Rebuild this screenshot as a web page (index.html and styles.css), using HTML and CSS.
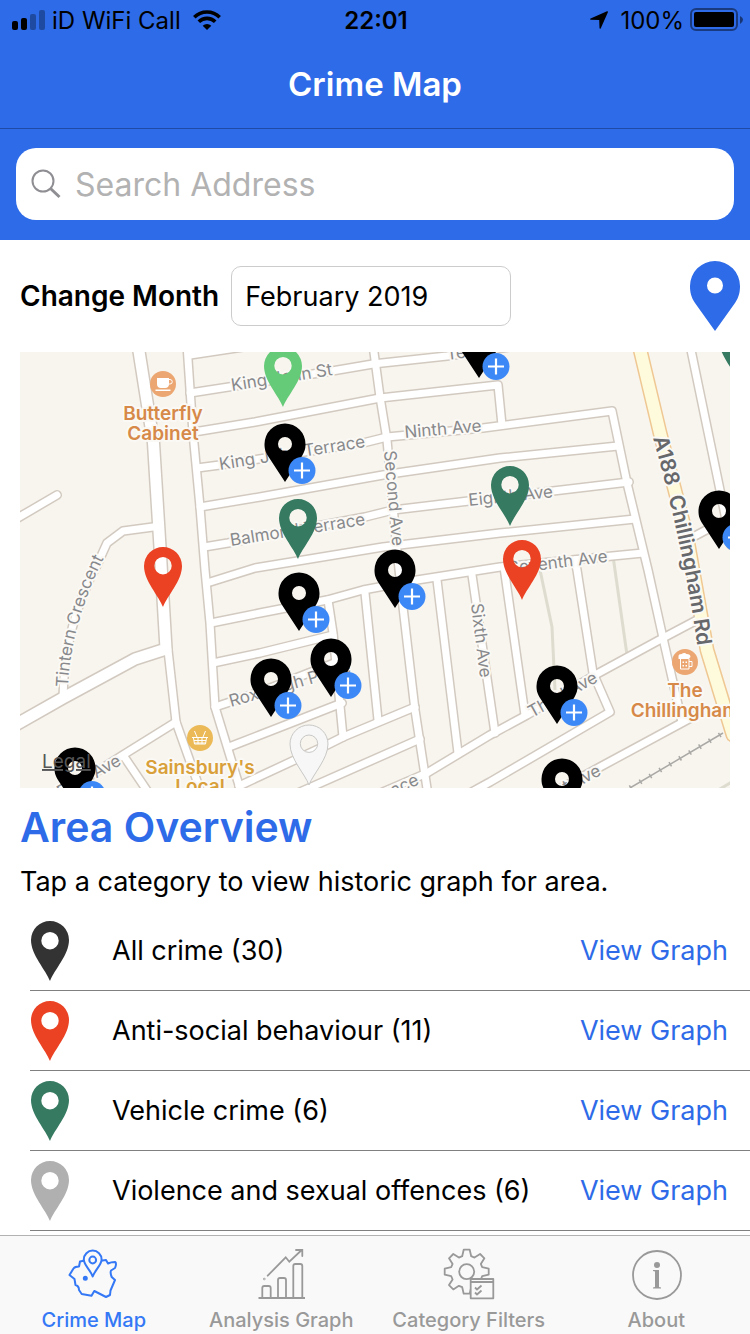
FILE: index.html
```html
<!DOCTYPE html>
<html lang="en">
<head>
<meta charset="utf-8">
<meta name="viewport" content="width=device-width, initial-scale=1">
<title>Crime Map</title>
<link rel="stylesheet" href="styles.css">
</head>
<body class="app">
<svg class="sprite" aria-hidden="true">
  <symbol id="pin" viewBox="0 0 38 60"><path fill="currentColor" fill-rule="evenodd" d="M19 60C15 49 0 34 0 19a19 19 0 0 1 38 0C38 34 23 49 19 60zM19 11a8.700 8.700 0 1 0 0 17.400a8.700 8.700 0 0 0 0-17.400z"/></symbol>
</svg>
<header class="top">
  <div class="status">
    <div class="status-side">
      <svg class="signal" viewBox="0 0 34 22" aria-hidden="true"><rect x="0" y="12" width="6" height="9" rx="2"/><rect x="9" y="9" width="6" height="12" rx="2"/><g opacity=".3"><rect x="18" y="5" width="6" height="16" rx="2"/><rect x="27" y="1" width="6" height="20" rx="2"/></g></svg>
      <span>iD WiFi Call</span>
      <svg class="wifi" viewBox="0 0 28 20" aria-hidden="true"><path d="M14 20l-4.300-4.300a6.200 6.200 0 0 1 8.600 0z"/><path fill="none" stroke="#000" stroke-width="3.600" d="M1.300 7.300a18 18 0 0 1 25.400 0M5.800 11.800a11.600 11.600 0 0 1 16.400 0"/></svg>
    </div>
    <strong class="time">22:01</strong>
    <div class="status-side status-right">
      <svg class="locate" viewBox="0 0 18 18" aria-hidden="true"><path d="M17 .3a.8.8 0 0 1 .9 1L10.800 17.300c-.3.8-1.300.700-1.300-.2L9.200 9 .800 8.700c-.900 0-1-1-.2-1.300z"/></svg>
      <span>100%</span>
      <svg class="battery" viewBox="0 0 54 24" aria-hidden="true"><rect x="1" y="1" width="46" height="21" rx="5" fill="none" stroke="#000" stroke-opacity=".45" stroke-width="2"/><rect x="4" y="4" width="40" height="15" rx="2"/><path fill-opacity=".5" d="M50 8q6 3.500 0 8z"/></svg>
    </div>
  </div>
  <h1 class="title">Crime Map</h1>
  <div class="search-bar">
    <label class="search">
      <svg class="search-icon" viewBox="0 0 30 30" fill="none" stroke="#8e8e93" aria-hidden="true"><circle cx="12" cy="12" r="10.500" stroke-width="2"/><path d="M19.500 19.500L28.500 28" stroke-width="3"/></svg>
      <input class="search-input" type="search" placeholder="Search Address" aria-label="Search Address">
    </label>
  </div>
</header>

<main class="content">
  <div class="month-row">
    <label class="month-label" for="month">Change Month</label>
    <input class="month-input" id="month" type="text" value="February 2019">
    <button class="pin-button" type="button" aria-label="Use my location"><svg class="pin-large" viewBox="0 0 50 70" aria-hidden="true"><path fill="#2e6be8" fill-rule="evenodd" d="M25 70L5 42C1 36 0 31 0 25a25 25 0 0 1 50 0c0 6-1 11-5 17zM25 16.500a8 8 0 1 0 0 16a8 8 0 0 0 0-16z"/></svg></button>
  </div>

  <svg class="map" viewBox="20 352 710 436" role="img" aria-label="Map of local crimes">
    <defs>
      <g id="roads">
        <path d="M16 519L57 495"/>
        <path d="M153 527L123 531L107 543L98 563Q64 625 63 698"/>
        <path d="M168 650L176 722L202 795"/>
        <path d="M176 722L123 755L60 795M123 755L150 795"/>
        <path d="M187 345L193 433L200 507L205 570L210 623L215 707L242 795"/>
        <path d="M190 355L250 346"/>
        <path d="M190 393L332 371L373 364L447 356L510 347"/>
        <path d="M194 432L255 422L380 398L498 385L502 425"/>
        <path d="M197 468L220 465L363 443L387 437L483 428L612 411L627 483L648 570L663 638L682 722"/>
        <path d="M200 507L260 497L383 475L500 458L618 446"/>
        <path d="M204 547L228 543L365 517L393 510L553 491L629 482"/>
        <path d="M207 583L255 568L383 547L500 533L635 519"/>
        <path d="M211 623L260 613L327 600L363 590L417 580L500 567L643 553"/>
        <path d="M213 663L260 653L333 635"/>
        <path d="M215 707L260 692L337 662"/>
        <path d="M229 747L260 735L342 703"/>
        <path d="M239 786L327 745L343 737L415 707"/>
        <path d="M300 792L420 739"/>
        <path d="M376 795L427 773L490 735L527 715L595 675L663 638L697 620"/>
        <path d="M470 793L490 782L610 712L593 673L577 570L575 560"/>
        <path d="M540 800L600 767L700 713"/>
        <path d="M373 345L380 397L387 440L397 550L403 607L415 710L428 795"/>
        <path d="M328 600L333 633L343 737M365 593L378 720M437 580L458 753M472 575L495 733M504 567L525 715"/>
        <path d="M690 345L720 490L731 545M693 537L725 520"/>
      </g>
      <path id="main-road" d="M138 345L153.500 443L160 547L166 649L135 659L63 698L10 728"/>
      <path id="a188" d="M639 345L660 433L687 537L707 650L733 735"/>
      <path id="tintern" d="M68 687C69 650 82 600 104 558"/>
      <path id="a188-label" d="M653 438Q686 555 700 665"/>
      <path id="spot" fill-rule="evenodd" d="M0 0C-4-11-19-26-19-41a19 19 0 0 1 38 0C19-26 4-11 0 0zM0-50a8.700 8.700 0 1 0 0 17.400a8.700 8.700 0 0 0 0-17.400z"/>
      <path id="group-pin" fill-rule="evenodd" d="M0 0L-17-26C-20-31-20.500-34-20.500-38a20.500 20.500 0 0 1 41 0C20.500-34 20-31 17-26zM0-45a7 7 0 1 0 0 14a7 7 0 0 0 0-14z"/>
      <g id="cluster"><use href="#group-pin"/><circle cx="17" cy="-11.500" r="13.500" fill="#3d88f7"/><path d="M9-11.500h16M17-19.500v16" stroke="#fff" stroke-width="2.200"/></g>
    </defs>
    <rect x="20" y="352" width="710" height="436" fill="#f8f5ee"/>
    <g fill="none" stroke="#dedccf" stroke-width="3"><path d="M536 558L540 570L552 627L555 690M613 556L627 655M715 792L735 780"/></g>
    <g fill="none" stroke="#aaa9a6" stroke-width="1.500"><path d="M630 788L723 733"/><path stroke-width="5" stroke-dasharray="1.500 10" d="M630 788L723 733"/></g>
    <g fill="none" stroke-linejoin="round" stroke-linecap="round">
      <use href="#a188" stroke="#efc793" stroke-width="15"/>
      <use href="#roads" stroke="#d2cac0" stroke-width="10"/>
      <use href="#main-road" stroke="#d2cac0" stroke-width="14"/>
      <use href="#roads" stroke="#fff" stroke-width="7"/>
      <use href="#main-road" stroke="#fff" stroke-width="11"/>
      <use href="#a188" stroke="#fdfbdc" stroke-width="12"/>
    </g>
    <g class="street">
      <text transform="translate(232 391) rotate(-9)">King John St</text>
      <text transform="translate(447 360) rotate(-7)">Tenth</text>
      <text transform="translate(220 470) rotate(-9)">King John Terrace</text>
      <text transform="translate(405 438) rotate(-5)">Ninth Ave</text>
      <text transform="translate(231 546) rotate(-9)">Balmoral Terrace</text>
      <text transform="translate(469 506) rotate(-6)">Eighth Ave</text>
      <text transform="translate(509 574) rotate(-7)">Seventh Ave</text>
      <text transform="translate(384 451) rotate(85)">Second Ave</text>
      <text transform="translate(471 604) rotate(83)">Sixth Ave</text>
      <text transform="translate(231 707) rotate(-16)">Roxburgh Place</text>
      <text transform="translate(532 718) rotate(-29)">Third Ave</text>
      <text transform="translate(540 806) rotate(-27)">First Ave</text>
      <text transform="translate(61 798) rotate(-29)">Fifth Ave</text>
      <text transform="translate(364 810) rotate(-25)">Terrace</text>
      <text><textPath href="#tintern">Tintern Crescent</textPath></text>
    </g>
    <text class="highway"><textPath href="#a188-label">A188&#160; Chillingham Rd</textPath></text>
    <g class="place">
      <circle cx="163" cy="384" r="13" fill="#eba671"/>
      <path fill="#fff" d="M157 378h12v6q0 4-4 4h-4q-4 0-4-4zM155.500 389.500h15v1.500h-15z"/><path fill="none" stroke="#fff" stroke-width="1.300" d="M168 379.500h2a2 2 0 0 1 0 4.500h-2"/>
      <text x="163" y="420">Butterfly</text><text x="163" y="440">Cabinet</text>
      <circle cx="685" cy="662" r="13" fill="#eba671"/>
      <path fill="none" stroke="#fff" stroke-width="1.600" d="M680.500 658.500v10.500h8.500v-10.500M689 661.500h3v5h-3"/><path fill="#fff" d="M678.500 656q0-2 3-2 3-2 5 0 4 0 4 3l-2 2h-10z"/><path fill="#fff" d="M682.500 661.500h1.500v1.500h-1.500zM685.500 661.500h1.500v1.500h-1.500zM682.500 665h1.500v1.500h-1.500zM685.500 665h1.500v1.500h-1.500z"/>
      <text x="685" y="697">The</text><text x="685" y="717">Chillingham</text>
    </g>
    <g class="place place-shop">
      <circle cx="200" cy="738" r="13" fill="#ebb956"/>
      <path fill="none" stroke="#fff" stroke-width="1.600" d="M192 737.500h16M194 740.500h12M194.500 743h11M194.500 731l2.500 6M205.500 731l-2.500 6M193.500 738l1 6h11l1-6M198 738v6M202 738v6"/>
      <text x="200" y="774">Sainsbury's</text><text x="200" y="793">Local</text>
    </g>
    <use href="#spot" x="283" y="407" fill="#66cb78"/>
    <use href="#spot" x="738" y="381" fill="#357a61"/>
    <use href="#cluster" x="479" y="378"/>
    <use href="#cluster" x="285" y="482"/>
    <use href="#spot" x="298" y="559" fill="#357a61"/>
    <use href="#spot" x="510" y="526" fill="#357a61"/>
    <use href="#spot" x="163" y="607" fill="#eb4224"/>
    <use href="#spot" x="522" y="600" fill="#eb4224"/>
    <use href="#cluster" x="719" y="549"/>
    <use href="#cluster" x="395" y="608"/>
    <use href="#cluster" x="299" y="631"/>
    <use href="#cluster" x="331" y="697"/>
    <use href="#cluster" x="271" y="717"/>
    <use href="#cluster" x="557" y="724"/>
    <use href="#spot" x="309" y="785" fill="#f7f7f7" stroke="#c8c8c6"/>
    <use href="#cluster" x="562" y="817"/>
    <use href="#cluster" x="75" y="806"/>
    <text class="legal" x="42" y="768">Legal</text>
  </svg>

  <section class="overview">
    <h2 class="overview-title">Area Overview</h2>
    <p class="overview-hint">Tap a category to view historic graph for area.</p>
    <ul class="categories">
      <li class="category"><svg class="pin pin-all" aria-hidden="true"><use href="#pin"/></svg><span class="category-name">All crime (30)</span><a class="graph-link" href="#all">View Graph</a></li>
      <li class="category"><svg class="pin pin-social" aria-hidden="true"><use href="#pin"/></svg><span class="category-name">Anti-social behaviour (11)</span><a class="graph-link" href="#social">View Graph</a></li>
      <li class="category"><svg class="pin pin-vehicle" aria-hidden="true"><use href="#pin"/></svg><span class="category-name">Vehicle crime (6)</span><a class="graph-link" href="#vehicle">View Graph</a></li>
      <li class="category"><svg class="pin pin-violence" aria-hidden="true"><use href="#pin"/></svg><span class="category-name">Violence and sexual offences (6)</span><a class="graph-link" href="#violence">View Graph</a></li>
    </ul>
  </section>
</main>

<nav class="tabs" aria-label="Main">
  <a class="tab tab-active" href="#map" aria-current="page">
    <svg class="tab-icon" viewBox="0 0 52 52"><g fill="none" stroke="currentColor" stroke-width="2" stroke-linejoin="round" stroke-linecap="round" transform="translate(1 1)"><path d="M23.700 27.500C21.500 21 14.800 16 14.800 10.500a8.900 8.900 0 0 1 17.800 0C32.600 16 26 21 23.700 27.500z"/><circle cx="23.700" cy="11" r="3.400"/><path d="M14.500 11.700L11 12.500L10 17.500Q6 17.500 4.500 19.500L.500 26L5.500 30L6.500 36Q10 37 10 41L12.700 45L22.500 46.800L25.300 42L37 48L41 46L41.500 41.500L46 31L42.700 28Q41 24 42 21.500L46 19Q48 14 46 13Q42 13 39 14.500L37 11L33.500 11.500"/><circle cx="16.300" cy="29.300" r="1.500" fill="currentColor"/></g></svg>
    <span>Crime Map</span>
  </a>
  <a class="tab" href="#analysis">
    <svg class="tab-icon" viewBox="0 0 52 52"><g fill="none" stroke="currentColor" stroke-width="1.800" transform="translate(2 0)"><path d="M1.500 50H48M5.300 50V40q0-2 2-2h4.400q2 0 2 2v10M21 50V32q0-2 2-2h4q2 0 2 2v18M36.300 50V18q0-2 2-2h5q2 0 2 2v32"/><path d="M10.700 27.700L28.700 9.300L32.300 13.700L44.700 2M39 2H45.300V8" stroke-linecap="round"/><circle cx="7.300" cy="31" r=".3"/></g></svg>
    <span>Analysis Graph</span>
  </a>
  <a class="tab" href="#filters">
    <svg class="tab-icon" viewBox="0 0 52 52"><g fill="none" stroke="currentColor" stroke-width="1.800" stroke-linejoin="round" transform="translate(1 0)"><path transform="translate(22.700 23.700)" d="M-4.500-15.500L-3-22H3L4.500-15.500L7.800-14.100L13.400-17.700L17.700-13.400L14.100-7.800L15.500-4.500L22-3V3L15.500 4.500L14.100 7.800L17.700 13.400L13.400 17.700L7.800 14.100L4.500 15.500L3 22H-3L-4.500 15.500L-7.800 14.100L-13.400 17.700L-17.700 13.400L-14.100 7.800L-15.500 4.500L-22 3V-3L-15.500-4.500L-14.100-7.800L-17.700-13.400L-13.400-17.700L-7.800-14.100z"/><circle cx="22.700" cy="23.700" r="7.500"/><path fill="#f9f9f9" d="M26.700 31H49.300V50.300H26.700z"/><path d="M26.700 34H49.300M31 39.500L33 41.500L37.500 37.500M31 44.500L33 46.500L37.500 42.500"/></g></svg>
    <span>Category Filters</span>
  </a>
  <a class="tab" href="#about">
    <svg class="tab-icon" viewBox="0 0 52 52"><circle cx="27" cy="27" r="24" fill="none" stroke="currentColor" stroke-width="1.800"/><circle cx="27" cy="17" r="3" fill="currentColor"/><path fill="currentColor" d="M23 22h6v17l2 .500v1h-8v-1l2-.500V23.500l-2-.500z"/></svg>
    <span>About</span>
  </a>
</nav>
</body>
</html>
```
FILE: styles.css
```css
* { box-sizing: border-box; }
.app {
  margin: 0;
  height: 100vh;
  display: flex;
  flex-direction: column;
  font-family: Inter, "Liberation Sans", sans-serif;
  font-size: 27px;
  color: #000;
  background: #fff;
}
.sprite { display: none; }
.top { flex: none; background: #2e6be8; }
.status {
  display: grid;
  grid-template-columns: 1fr auto 1fr;
  align-items: center;
  height: 40px;
  padding: 0 10px 0 12px;
  font-size: 24px;
}
.status-side { display: flex; align-items: center; gap: 6px; }
.status-right { justify-content: flex-end; }
.time { font-weight: 600; }
.signal { width: 34px; height: 22px; }
.wifi { width: 28px; height: 20px; margin-left: 6px; }
.locate { width: 18px; height: 18px; margin-right: 6px; }
.battery { width: 54px; height: 24px; margin-right: -4px; }
.title {
  margin: 0;
  height: 89px;
  line-height: 88px;
  border-bottom: 1px solid #1f4ba6;
  text-align: center;
  font-size: 33px;
  font-weight: 600;
  color: #fff;
}
.search-bar { padding: 19px 16px 20px; }
.search {
  display: flex;
  align-items: center;
  gap: 14px;
  height: 72px;
  padding: 0 15px;
  border-radius: 20px;
  background: #fff;
}
.search-icon { flex: none; width: 30px; height: 30px; }
.search-input {
  flex: 1;
  min-width: 0;
  border: 0;
  padding: 0;
  outline: 0;
  background: none;
  font: inherit;
  font-size: 32px;
}
.search-input::placeholder { color: #b2b2b2; opacity: 1; }
.content { flex: 1; min-height: 0; overflow: hidden; }
.month-row {
  display: flex;
  align-items: center;
  height: 112px;
  padding: 0 10px 0 20px;
}
.month-label { font-size: 28px; font-weight: 600; margin-right: 12px; }
.month-input {
  width: 280px;
  height: 60px;
  padding: 0 13px;
  border: 1px solid #ccc;
  border-radius: 10px;
  font: inherit;
  color: inherit;
  background: #fff;
}
.pin-button { margin-left: auto; padding: 0; border: 0; background: none; }
.pin-large { display: block; width: 50px; height: 70px; }
.map { display: block; width: calc(100% - 40px); margin: 0 20px; overflow: hidden; }
.street, .highway, .place {
  paint-order: stroke;
  stroke: #fbf9f5;
  stroke-width: 4px;
  stroke-linejoin: round;
}
.street { font-size: 17px; fill: #88898c; }
.highway { font-size: 21px; font-weight: 600; fill: #66686b; }
.place { font-size: 19px; font-weight: 600; fill: #d68948; text-anchor: middle; }
.place circle { stroke: none; }
.place path { stroke-width: 1px; }
.place path[fill="#fff"] { stroke: none; }
.place path[fill="none"] { stroke: #fff; }
.place-shop { fill: #d9a03a; }
.legal { font-size: 19px; fill: #555; text-decoration: underline; }
.overview-title {
  margin: 0;
  padding: 13px 20px 11px;
  line-height: 52px;
  font-size: 41px;
  font-weight: 600;
  color: #2e6be8;
}
.overview-hint { margin: 0 20px 11px; line-height: 36px; }
.categories { margin: 0; padding: 0 0 0 30px; list-style: none; }
.category {
  display: flex;
  align-items: center;
  height: 80px;
  padding-right: 22px;
  border-bottom: 1px solid #808080;
}
.pin { flex: none; width: 40px; height: 60px; margin-right: 42px; }
.pin-all { color: #333; }
.pin-social { color: #eb4224; }
.pin-vehicle { color: #357a61; }
.pin-violence { color: #b0b0b0; }
.category-name { flex: 1; }
.graph-link { color: #2e6be8; text-decoration: none; }
.tabs {
  flex: none;
  display: grid;
  grid-template-columns: repeat(4, 1fr);
  height: 99px;
  border-top: 1px solid #b2b2b2;
  background: #f9f9f9;
}
.tab {
  display: flex;
  flex-direction: column;
  align-items: center;
  gap: 8px;
  padding-top: 12px;
  font-size: 20px;
  font-weight: 500;
  line-height: 24px;
  color: #999;
  text-decoration: none;
}
.tab-active { color: #3478f6; }
.tab-icon { width: 52px; height: 52px; }
```
